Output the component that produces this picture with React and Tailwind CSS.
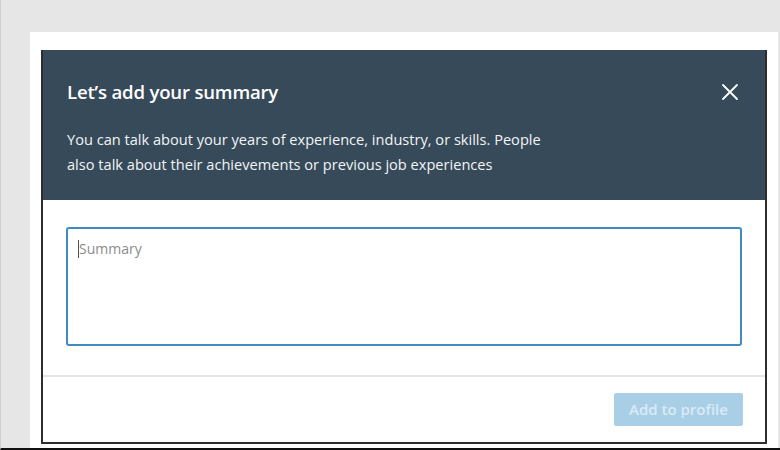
import React from "react";

export default function App() {
  return (
    <div className="w-[780px] h-[450px] overflow-hidden bg-[#e6e6e6] border-l border-l-[#cfcfcf] border-b-2 border-b-[#111] flex flex-col" style={{ fontFamily: '"Open Sans", "Noto Sans", sans-serif' }}>
      <div className="ml-[29px] mt-[32px] mr-[2px] flex-1 bg-white pl-[11px] pt-[18px] pr-[6px] flex flex-col">
        <div className="w-[726px] h-[394px] border-x-2 border-b-2 border-[#2e2e2e] flex flex-col">
          <div className="h-[150px] bg-[#364a59] pl-[24px] pr-[26px] pt-[30px] flex flex-col">
            <div className="flex items-start justify-between">
              <h1 className="text-[18.6px] leading-[24px] font-semibold text-white tracking-[-0.2px]">Let’s add your summary</h1>
              <svg width="18" height="18" viewBox="0 0 18 18" className="mt-[3px]">
                <path d="M2 2 L16 16 M16 2 L2 16" stroke="#ffffff" strokeWidth="1.8" strokeLinecap="round" />
              </svg>
            </div>
            <p className="mt-[23px] text-[14.6px] leading-[25px] text-[#f2f4f5] w-[500px]">
              You can talk about your years of experience, industry, or skills. People also talk about their achievements or previous job experiences
            </p>
          </div>
          <div className="px-[23px] pt-[27px] pb-[29px]">
            <div className="h-[119px] border-2 border-[#3f8cc4] rounded-[3px] pl-[10px] pt-[9px] flex items-start">
              <span className="mt-[2px] w-px h-[18px] bg-[#555]"></span>
              <span className="text-[14px] leading-[22px] text-[#8c8c8c]">Summary</span>
            </div>
          </div>
          <div className="h-[2px] bg-[#e4e4e4]"></div>
          <div className="flex justify-end pr-[22px] pt-[16px]">
            <button className="w-[129px] h-[33px] bg-[#a9cfe7] rounded-[2px] text-[15px] font-semibold text-[#d9eaf6]">Add to profile</button>
          </div>
        </div>
      </div>
    </div>
  );
}
